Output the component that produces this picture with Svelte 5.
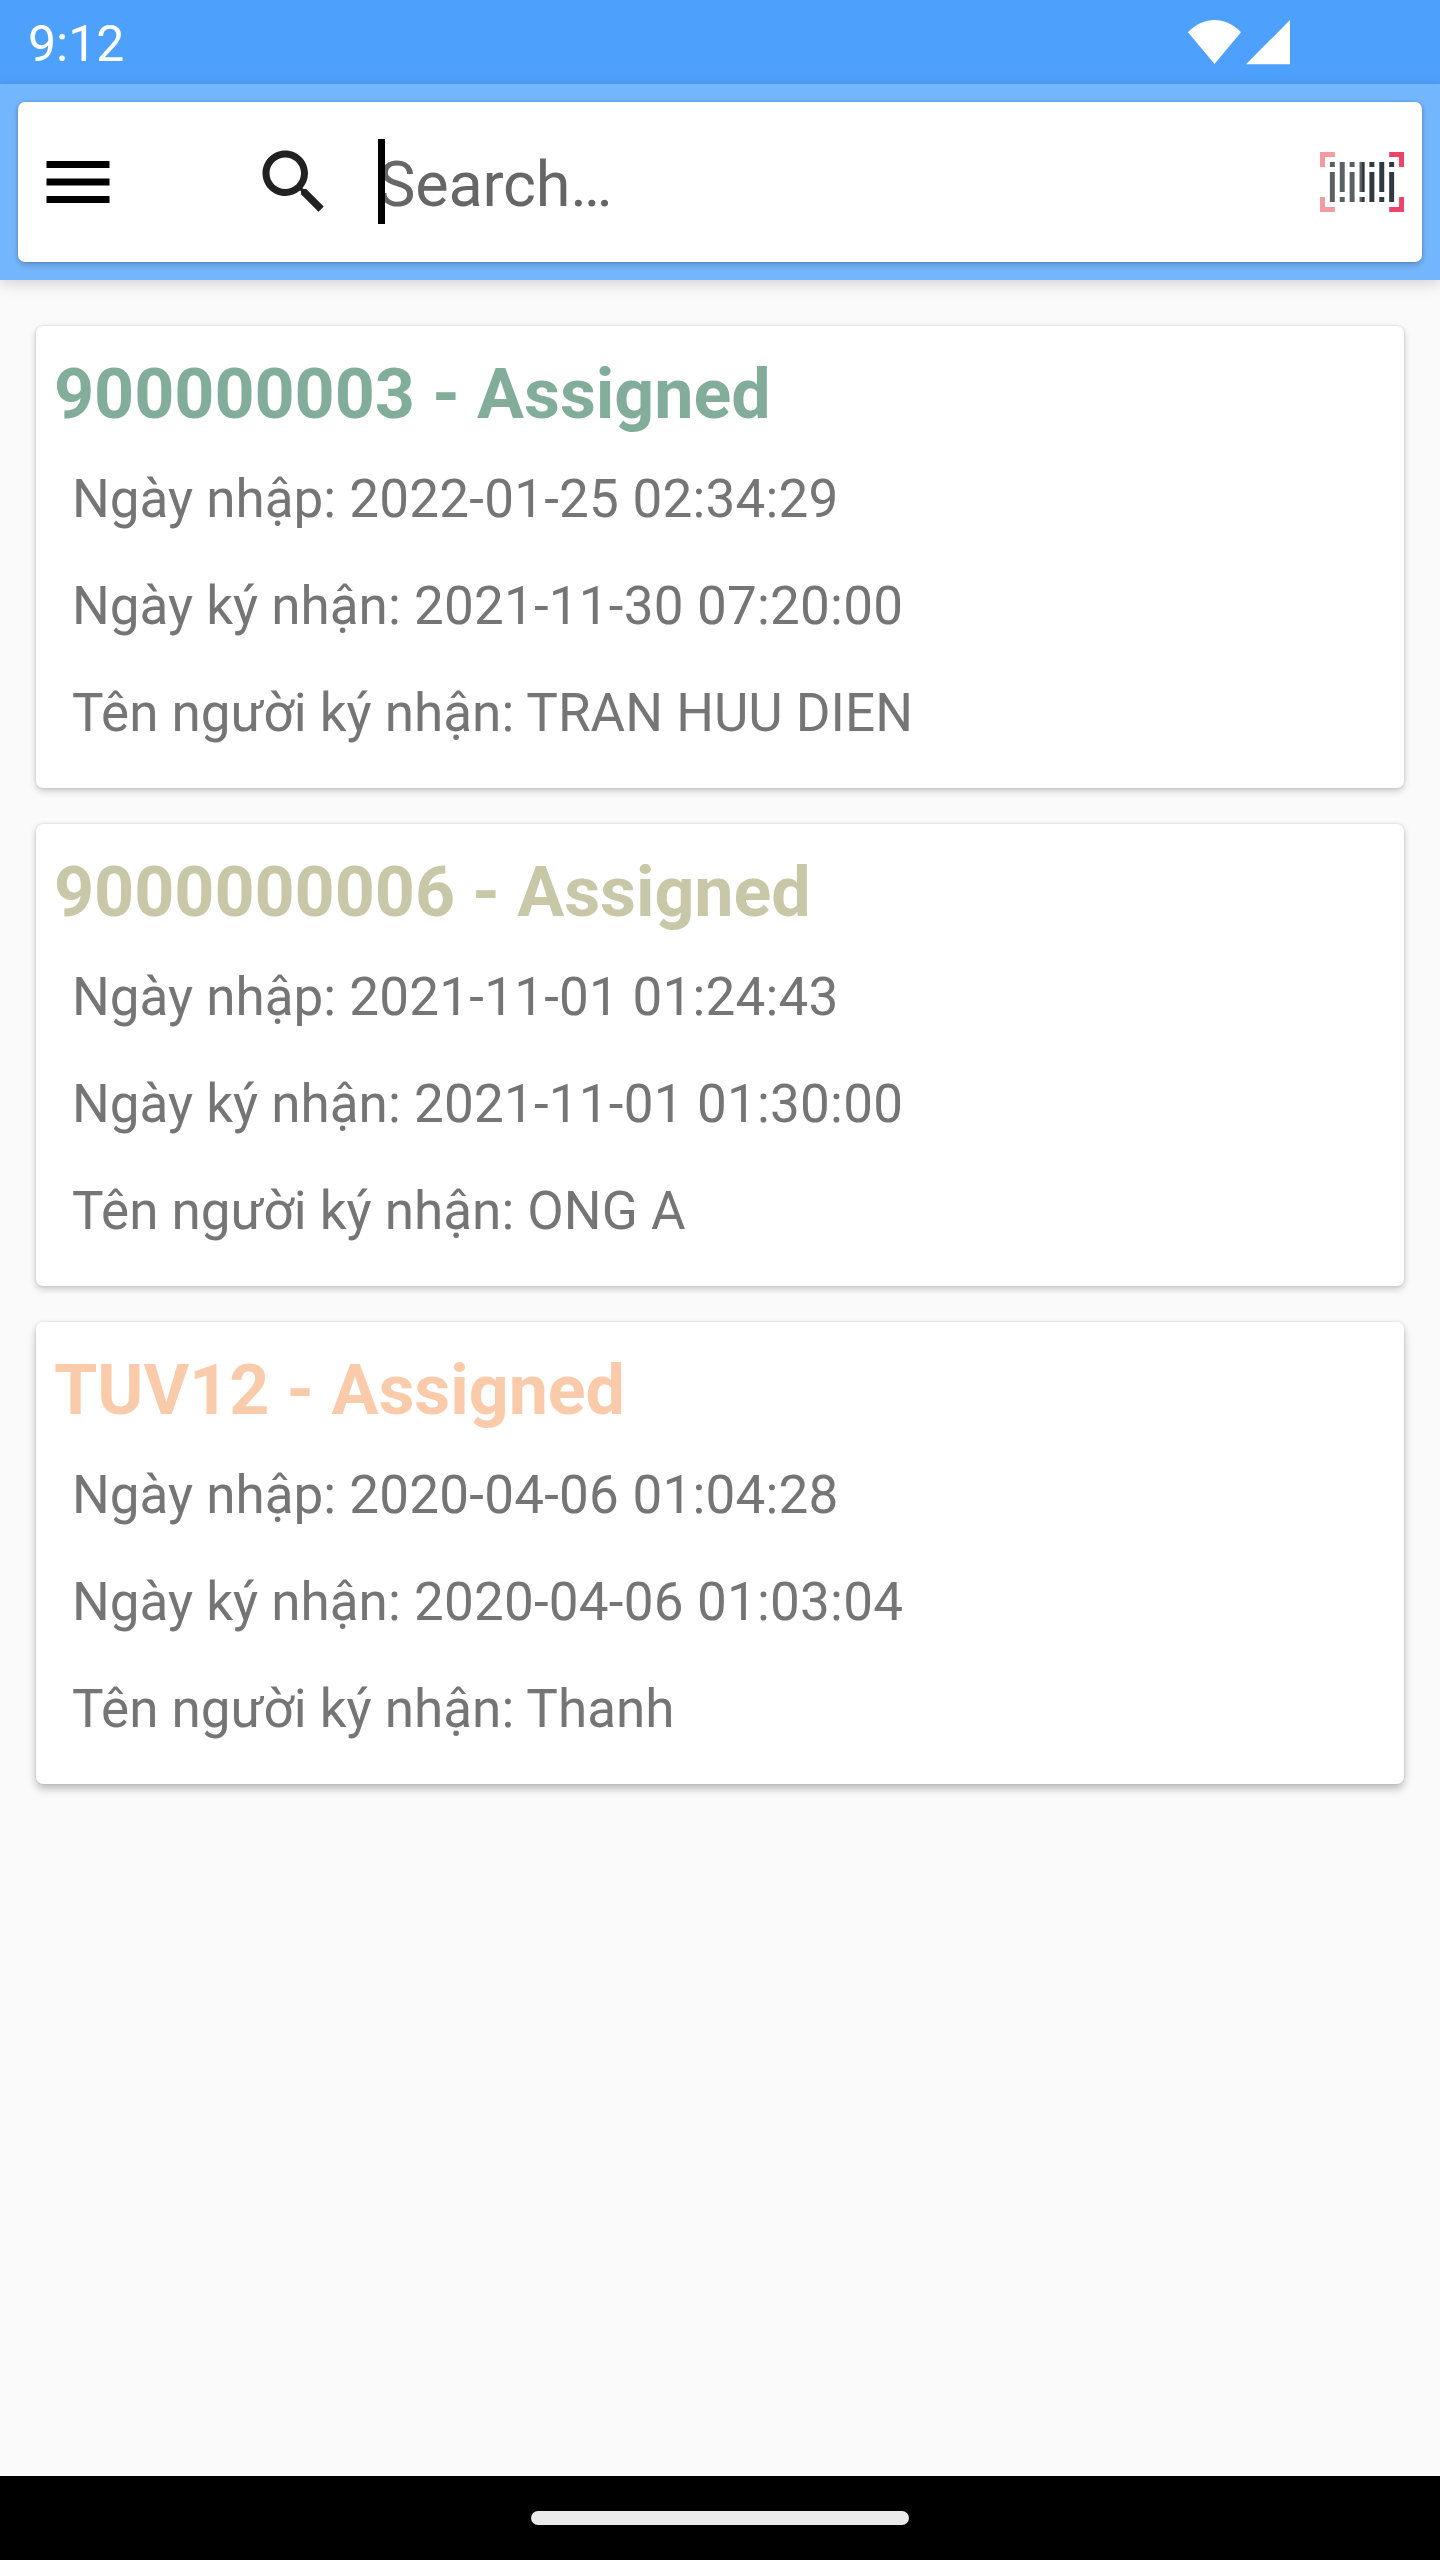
<script>
  let orders = $state([
    { code: '900000003', status: 'Assigned', color: '#82ad9b', created: '2022-01-25 02:34:29', signed: '2021-11-30 07:20:00', receiver: 'TRAN HUU DIEN' },
    { code: '9000000006', status: 'Assigned', color: '#c8c7a7', created: '2021-11-01 01:24:43', signed: '2021-11-01 01:30:00', receiver: 'ONG A' },
    { code: 'TUV12', status: 'Assigned', color: '#facbab', created: '2020-04-06 01:04:28', signed: '2020-04-06 01:03:04', receiver: 'Thanh' }
  ]);

  // barcode columns, the middle one is split between both tones
  const bars = [0, 1, 2, 3, 4, 5, 6];
</script>

{#snippet barcodeIcon()}
  <svg class="barcode" viewBox="0 0 17 12" preserveAspectRatio="none">
    <path fill="#f29a9f" d="M0 0h3v1H1v2H0zM0 12h3v-1H1V9H0z" />
    <path fill="#ec4468" d="M17 0h-3v1h2v2h1zM17 12h-3v-1h2V9h1z" />
    {#each bars as i}
      <path
        fill={i < 4 ? '#5a5f63' : '#303940'}
        d={i % 2 === 0 ? `M${2 + i * 2} 2h1v1h-1zM${2 + i * 2} 4h1v6h-1z` : `M${2 + i * 2} 2h1v6h-1zM${2 + i * 2} 9h1v1h-1z`}
      />
    {/each}
    <path fill="#303940" d="M8.5 2H9v6h-.5zM8.5 9H9v1h-.5z" />
  </svg>
{/snippet}

{#snippet orderCard(order)}
  <article class="card">
    <h2 style="color: {order.color}">{order.code} - {order.status}</h2>
    <p>Ngày nhập: <span class="date">{order.created}</span></p>
    <p>Ngày ký nhận: <span class="date">{order.signed}</span></p>
    <p>Tên người ký nhận: {order.receiver}</p>
  </article>
{/snippet}

<div class="screen">
  <div class="status-bar">
    <span class="clock">9:12</span>
    <svg class="signals" viewBox="0 0 104 46">
      <path d="M1 13.2C9 5 18 1 27.5 1S46 5 54 13.2L27.5 45z" />
      <path d="M59 45.3H103V1z" />
    </svg>
  </div>

  <header>
    <div class="search-box">
      <svg class="icon" viewBox="0 0 24 24">
        <path fill="#000" d="M3 18h18v-2H3v2zm0-5h18v-2H3v2zm0-7v2h18V6H3z" />
      </svg>
      <svg class="icon search" viewBox="0 0 24 24">
        <path fill="#212121" d="M15.5 14h-.79l-.28-.27C15.41 12.59 16 11.11 16 9.5 16 5.91 13.09 3 9.5 3S3 5.91 3 9.5 5.91 16 9.5 16c1.61 0 3.09-.59 4.23-1.57l.27.28v.79l5 4.99L20.49 19l-4.99-5zm-6 0C7.01 14 5 11.99 5 9.5S7.01 5 9.5 5 14 7.01 14 9.5 11.99 14 9.5 14z" />
      </svg>
      <div class="field">
        <span class="hint">Search…</span>
        <span class="caret"></span>
      </div>
      {@render barcodeIcon()}
    </div>
  </header>

  <main>
    {#each orders as order}
      {@render orderCard(order)}
    {/each}
  </main>

  <footer><div class="handle"></div></footer>
</div>

<style>
  :global(body) { background: #fafafa; }

  .screen {
    width: 1440px;
    height: 2560px;
    display: flex;
    flex-direction: column;
    background: #fafafa;
    font-family: Roboto, "Liberation Sans", sans-serif;
    overflow: hidden;
  }

  .status-bar {
    height: 84px;
    flex: none;
    box-sizing: border-box;
    padding: 0 149px 0 28px;
    display: flex;
    align-items: center;
    justify-content: space-between;
    background: #4da0fb;
  }

  .clock { color: #fff; font-size: 50px; line-height: 58px; padding-top: 3px; }
  .signals { width: 104px; height: 46px; fill: #fff; margin-bottom: 1px; }

  header {
    height: 196px;
    flex: none;
    box-sizing: border-box;
    padding: 18px;
    background: #74b6fd;
    box-shadow: 0 4px 14px rgba(0, 0, 0, 0.16);
  }

  .search-box {
    height: 160px;
    box-sizing: border-box;
    padding: 0 18px;
    display: flex;
    align-items: center;
    background: #fff;
    border-radius: 7px;
    box-shadow: 0 3px 7px rgba(0, 0, 0, 0.2), 0 0 3px rgba(0, 0, 0, 0.18);
  }

  .icon { width: 84px; height: 84px; flex: none; }
  .search { margin-left: 132px; }

  .field {
    position: relative;
    flex: 1;
    height: 85px;
    margin: 0 0 1px 42px;
  }

  .hint { display: block; font-size: 63px; line-height: 91px; letter-spacing: -0.2px; color: #666; }

  /* text cursor lies over the first letter */
  .caret {
    position: absolute;
    left: 0;
    top: 0;
    width: 7px;
    height: 85px;
    background: #000;
  }

  .barcode { width: 84px; height: 60px; flex: none; }

  main {
    flex: 1;
    padding: 46px 36px 0;
    display: flex;
    flex-direction: column;
    gap: 36px;
  }

  .card {
    height: 462px;
    box-sizing: border-box;
    padding: 27px 18px 0;
    background: #fff;
    border-radius: 7px;
    box-shadow: 0 3px 7px rgba(0, 0, 0, 0.2), 0 0 3px rgba(0, 0, 0, 0.12);
  }

  .card:last-child { box-shadow: 0 5px 9px rgba(0, 0, 0, 0.24), 0 0 3px rgba(0, 0, 0, 0.12); }

  h2 { margin: 0 0 11px; font-size: 70px; line-height: 82px; font-weight: 700; letter-spacing: -0.06px; }
  p { margin: 0 18px; font-size: 53px; line-height: 107px; color: #757575; }
  .date { letter-spacing: 0.22px; }

  footer {
    height: 84px;
    flex: none;
    display: flex;
    align-items: center;
    justify-content: center;
    background: #000;
  }

  .handle { width: 378px; height: 14px; border-radius: 7px; background: #ebebeb; }
</style>
